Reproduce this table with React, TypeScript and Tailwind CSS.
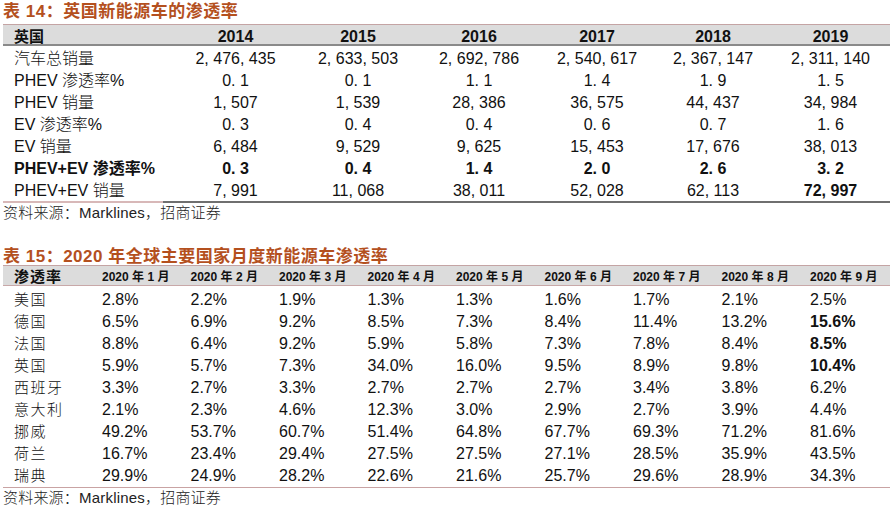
const FONT = "font-['Liberation_Sans','Noto_Sans_CJK_SC',sans-serif]";

type Row14 = { label: string; vals: string[]; bold?: boolean; boldLast?: boolean };

const YEARS = ["2014", "2015", "2016", "2017", "2018", "2019"];

const ROWS_14: Row14[] = [
  { label: "汽车总销量", vals: ["2, 476, 435", "2, 633, 503", "2, 692, 786", "2, 540, 617", "2, 367, 147", "2, 311, 140"] },
  { label: "PHEV 渗透率%", vals: ["0. 1", "0. 1", "1. 1", "1. 4", "1. 9", "1. 5"] },
  { label: "PHEV 销量", vals: ["1, 507", "1, 539", "28, 386", "36, 575", "44, 437", "34, 984"] },
  { label: "EV 渗透率%", vals: ["0. 3", "0. 4", "0. 4", "0. 6", "0. 7", "1. 6"] },
  { label: "EV 销量", vals: ["6, 484", "9, 529", "9, 625", "15, 453", "17, 676", "38, 013"] },
  { label: "PHEV+EV 渗透率%", bold: true, vals: ["0. 3", "0. 4", "1. 4", "2. 0", "2. 6", "3. 2"] },
  { label: "PHEV+EV 销量", boldLast: true, vals: ["7, 991", "11, 068", "38, 011", "52, 028", "62, 113", "72, 997"] },
];

const MONTHS = ["1", "2", "3", "4", "5", "6", "7", "8", "9"];

// last column bold for 德国 / 法国 / 英国
const ROWS_15: { label: string; vals: string[]; boldLast?: boolean }[] = [
  { label: "美国", vals: ["2.8", "2.2", "1.9", "1.3", "1.3", "1.6", "1.7", "2.1", "2.5"] },
  { label: "德国", boldLast: true, vals: ["6.5", "6.9", "9.2", "8.5", "7.3", "8.4", "11.4", "13.2", "15.6"] },
  { label: "法国", boldLast: true, vals: ["8.8", "6.4", "9.2", "5.9", "5.8", "7.3", "7.8", "8.4", "8.5"] },
  { label: "英国", boldLast: true, vals: ["5.9", "5.7", "7.3", "34.0", "16.0", "9.5", "8.9", "9.8", "10.4"] },
  { label: "西班牙", vals: ["3.3", "2.7", "3.3", "2.7", "2.7", "2.7", "3.4", "3.8", "6.2"] },
  { label: "意大利", vals: ["2.1", "2.3", "4.6", "12.3", "3.0", "2.9", "2.7", "3.9", "4.4"] },
  { label: "挪威", vals: ["49.2", "53.7", "60.7", "51.4", "64.8", "67.7", "69.3", "71.2", "81.6"] },
  { label: "荷兰", vals: ["16.7", "23.4", "29.4", "27.5", "27.5", "27.1", "28.5", "35.9", "43.5"] },
  { label: "瑞典", vals: ["29.9", "24.9", "28.2", "22.6", "21.6", "25.7", "29.6", "28.9", "34.3"] },
];

const GRID_14 = "grid grid-cols-[171px_123px_122px_120px_116px_116px_119px]";
const GRID_15 = "grid grid-cols-[96px_repeat(8,88.5px)_83px]";

function Source() {
  return (
    <div className="h-[20px] flex items-center text-[15px] font-light text-[#222] tracking-[0.2px]">
      资料来源：Marklines，招商证券
    </div>
  );
}

export default function App() {
  return (
    <div className={`w-[894px] h-[513px] bg-white overflow-hidden pl-[3px] text-[#111] ${FONT}`}>
      {/* 表 14 */}
      <div className="h-[24px] flex items-end text-[17px] leading-[20px] tracking-[0.5px] font-bold text-[#b4501e] pb-[2px]">
        表 14：英国新能源车的渗透率
      </div>
      <div className="w-[887px]">
        <div className={`${GRID_14} h-[22px] bg-[#dcdcdc] border-t border-[#c4a4a4] border-b-2 border-b-[#8a8a8a] items-center`}>
          <div className="pl-[11px] text-[15px] font-bold">英国</div>
          {YEARS.map((y) => (
            <div key={y} className="text-center text-[16px] font-bold">
              {y}
            </div>
          ))}
        </div>
        <div className="pt-[1px]">
          {ROWS_14.map((r) => (
            <div key={r.label} className={`${GRID_14} h-[22px] items-center text-[16px] ${r.bold ? "font-bold" : ""}`}>
              <div className={`pl-[11px] ${r.bold ? "" : "font-light"}`}>{r.label}</div>
              {r.vals.map((v, i) => (
                <div
                  key={i}
                  className={`text-center ${r.boldLast && i === r.vals.length - 1 ? "font-bold" : ""}`}
                >
                  {v}
                </div>
              ))}
            </div>
          ))}
        </div>
        <div className="h-[2px] bg-[linear-gradient(to_right,#d8b8b8_0px,#d8b8b8_160px,#6f6f6f_160px)]" />
      </div>
      <Source />

      {/* 表 15 */}
      <div className="h-[42px] flex items-end text-[17px] leading-[17px] tracking-[0.5px] font-bold text-[#b4501e]">
        表 15：2020 年全球主要国家月度新能源车渗透率
      </div>
      <div className="w-[887px]">
        <div className={`${GRID_15} h-[21px] bg-[#dcdcdc] border-t border-[#c4a4a4] border-b border-b-[#c8a8a8] items-center`}>
          <div className="pl-[11px] text-[15px] font-bold tracking-[1px]">渗透率</div>
          {MONTHS.map((m) => (
            <div key={m} className="pl-[3px] text-[12px] font-bold whitespace-nowrap">
              2020 年 {m} 月
            </div>
          ))}
        </div>
        <div className="pt-[2px]">
          {ROWS_15.map((r) => (
            <div key={r.label} className={`${GRID_15} h-[22px] items-center text-[16px]`}>
              <div className="pl-[11px] text-[15px] font-light tracking-[1.5px]">{r.label}</div>
              {r.vals.map((v, i) => (
                <div
                  key={i}
                  className={`pl-[3px] ${r.boldLast && i === r.vals.length - 1 ? "font-bold" : ""}`}
                >
                  {v}%
                </div>
              ))}
            </div>
          ))}
        </div>
        <div className="h-[1px] mt-[1px] bg-[#c9a3a3]" />
      </div>
      <Source />
    </div>
  );
}
